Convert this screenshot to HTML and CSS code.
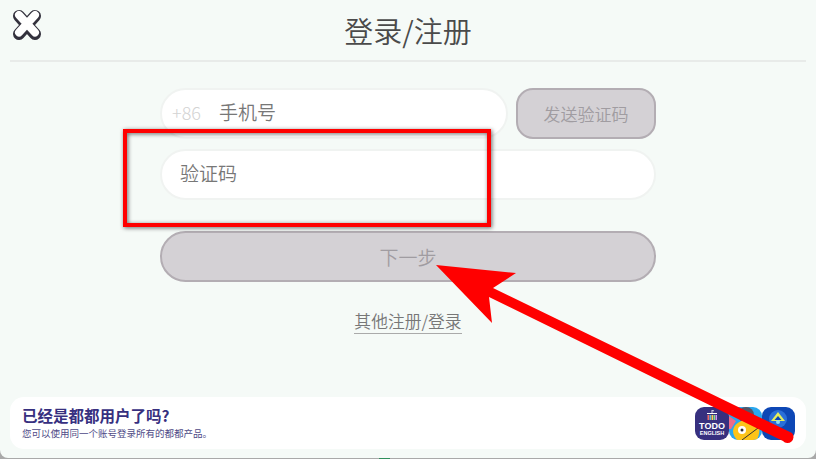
FILE: index.html
```html
<!DOCTYPE html>
<html lang="zh-CN">
<head>
    <meta charset="UTF-8">
    <title>登录/注册</title>
    <link rel="stylesheet" href="styles.css">
</head>
<body>
    <div class="screen">
        <!-- Header -->
        <div class="header">
            <svg class="logo" viewBox="0 0 30 32" width="30" height="32">
                <path d="M7 7 L23 25 M23 7 L7 25" stroke="#33313d" stroke-width="12" stroke-linecap="round" fill="none"/>
                <path d="M7 6 L23 23.500 M23 6 L7 23.500" stroke="#fff" stroke-width="8" stroke-linecap="round" fill="none"/>
            </svg>
            <h1>登录/注册</h1>
        </div>

        <!-- Form -->
        <div class="form">
            <div class="phone-row">
                <div class="field phone-field">
                    <span class="prefix">+86</span>
                    <span class="placeholder">手机号</span>
                </div>
                <div class="button send-button">发送验证码</div>
            </div>
            <div class="field code-field">
                <span class="placeholder">验证码</span>
            </div>
            <div class="button next-button">下一步</div>
            <a class="other-link">其他注册/登录</a>
        </div>

        <!-- Bottom card -->
        <div class="promo">
            <div class="promo-text">
                <div class="promo-title">已经是都都用户了吗?</div>
                <div class="promo-sub">您可以使用同一个账号登录所有的都都产品。</div>
            </div>
            <div class="app-icons">
                <div class="app-icon todo">
                    <svg viewBox="0 0 12 11" width="12" height="11">
                        <path d="M6 0 L6 3 M6 0 L8 1" stroke="#fff" stroke-width="0.800" fill="none"/>
                        <rect x="1" y="3" width="10" height="1" fill="#fff"/>
                        <rect x="1.500" y="5" width="1.500" height="5" fill="#e66"/>
                        <rect x="3.500" y="5" width="1.500" height="5" fill="#6bd"/>
                        <rect x="5.500" y="5" width="1.500" height="5" fill="#fc5"/>
                        <rect x="7.500" y="5" width="1.500" height="5" fill="#8d8"/>
                        <rect x="9.500" y="5" width="1.500" height="5" fill="#c9e"/>
                    </svg>
                    <span class="todo-big">TODO</span>
                    <span class="todo-small">ENGLISH</span>
                </div>
                <div class="app-icon math">
                    <svg viewBox="0 0 33 33" width="33" height="33">
                        <circle cx="17" cy="8" r="8" fill="#556"/>
                        <path d="M0 9 L7 14 L2 22 L0 22 Z" fill="#ef6a8a"/>
                        <path d="M4 24 C5 15 15 12 22 13 C30 15 33 22 28 33 L8 33 C6 30 4 28 4 24 Z" fill="#fcc419"/>
                        <circle cx="13" cy="23" r="4" fill="#fff"/>
                        <circle cx="13" cy="23" r="1.500" fill="#333"/>
                        <path d="M13 33 L29 21" stroke="#333" stroke-width="1"/>
                    </svg>
                </div>
                <div class="app-icon blue">
                    <svg viewBox="0 0 33 33" width="33" height="33">
                        <circle cx="16" cy="12" r="9" fill="#2a6fd8"/>
                        <path d="M16 5 L23 14 L9 14 Z" fill="#e6ef5a"/>
                        <path d="M16 9 L19.500 13 L12.500 13 Z" fill="#0d47b5"/>
                        <circle cx="16" cy="15" r="2" fill="#8fe0f0"/>
                        <rect x="10" y="25" width="12" height="2" fill="#5fd6e0"/>
                    </svg>
                </div>
            </div>
        </div>

        <!-- Annotations drawn on top of the screenshot -->
        <svg class="annotations" width="816" height="459" viewBox="0 0 816 459">
            <defs>
                <filter id="soft" x="-5%" y="-10%" width="110%" height="120%">
                    <feDropShadow dx="1" dy="1" stdDeviation="2" flood-color="#000" flood-opacity="0.6"/>
                </filter>
            </defs>
            <rect x="125" y="131" width="364" height="94" fill="none" stroke="#f00" stroke-width="4" filter="url(#soft)"/>
            <path d="M436 265 L516 273 L493 288 L792 433 A5 5 0 0 1 783 441 L489 297 L492 323 Z" fill="#f00"/>
        </svg>
    </div>
    <div class="bottom-mark"></div>
</body>
</html>
```

FILE: styles.css
```css
/* General Styles */
* {
    box-sizing: border-box;
}

body {
    margin: 0;
    padding: 0;
    overflow: hidden;
    font-family: "Noto Sans CJK SC", "Noto Sans", sans-serif;
    background: #a9a9a9;
}

.screen {
    position: relative;
    width: 816px;
    height: 458px;
    background: #f5faf7;
    border-radius: 0 0 8px 8px;
    display: flex;
    flex-direction: column;
    padding: 0 10px;
    overflow: hidden;
}

/* Sliver of the page behind the window */
.bottom-mark {
    width: 11px;
    height: 1px;
    margin-left: 379px;
    background: #2f8f5b;
}

/* Header */
.header {
    position: relative;
    height: 62px;
    border-bottom: 2px solid #e8ebe9;
    display: flex;
    align-items: center;
    justify-content: center;
}

.logo {
    position: absolute;
    left: 2px;
    top: 9px;
}

h1 {
    margin: 0;
    font-size: 29px;
    font-weight: 350;
    color: #4a4a4a;
}

/* Form */
.form {
    width: 496px;
    margin: 26px auto 0;
    display: flex;
    flex-direction: column;
    align-items: stretch;
}

.phone-row {
    display: flex;
    gap: 8px;
}

.field {
    height: 51px;
    background: #fff;
    border: 2px solid #f0f3f1;
    border-radius: 26px;
    display: flex;
    align-items: center;
    padding-bottom: 4px;
}

.phone-field {
    width: 348px;
    padding-left: 10px;
}

.code-field {
    margin-top: 10px;
    padding-left: 18px;
}

.prefix {
    width: 47px;
    font-size: 18px;
    font-weight: 300;
    color: #d3d3d3;
}

.placeholder {
    font-size: 19px;
    font-weight: 350;
    color: #777;
}

.button {
    background: #d4d1d5;
    border: 2px solid #b3adb3;
    color: #a09ca1;
    font-weight: 350;
    display: flex;
    align-items: center;
    justify-content: center;
}

.send-button {
    width: 140px;
    height: 51px;
    border-radius: 17px;
    font-size: 17px;
}

.next-button {
    height: 51px;
    margin-top: 31px;
    border-radius: 26px;
    font-size: 19px;
}

.other-link {
    align-self: center;
    margin-top: 27px;
    font-size: 16.800px;
    font-weight: 350;
    line-height: 24px;
    color: #777;
    border-bottom: 1px solid #aaa;
}

/* Bottom card */
.promo {
    margin-top: auto;
    margin-bottom: 9px;
    height: 52px;
    background: #fff;
    border-radius: 14px;
    padding: 0 11px 0 12px;
    display: flex;
    align-items: center;
    justify-content: space-between;
}

.promo-title {
    font-size: 15.500px;
    line-height: 19px;
    font-weight: 700;
    color: #37307f;
}

.promo-sub {
    font-size: 9.500px;
    line-height: 16px;
    color: #4e4a86;
}

.app-icons {
    display: flex;
}

.app-icon {
    width: 33px;
    height: 33px;
    border-radius: 9px;
    overflow: hidden;
    display: flex;
    flex-direction: column;
    align-items: center;
    justify-content: center;
}

.todo {
    width: 34px;
    background: #37307f;
    color: #fff;
    font-family: "Liberation Sans", sans-serif;
    font-weight: 700;
}

.todo-big {
    font-size: 9px;
    line-height: 8px;
    margin-top: 1px;
}

.todo-small {
    font-size: 5.500px;
    line-height: 6px;
}

.math {
    background: #2aa7ee;
}

.blue {
    background: #0d47b5;
}

/* Annotations */
.annotations {
    position: absolute;
    top: 0;
    left: 0;
}
```
